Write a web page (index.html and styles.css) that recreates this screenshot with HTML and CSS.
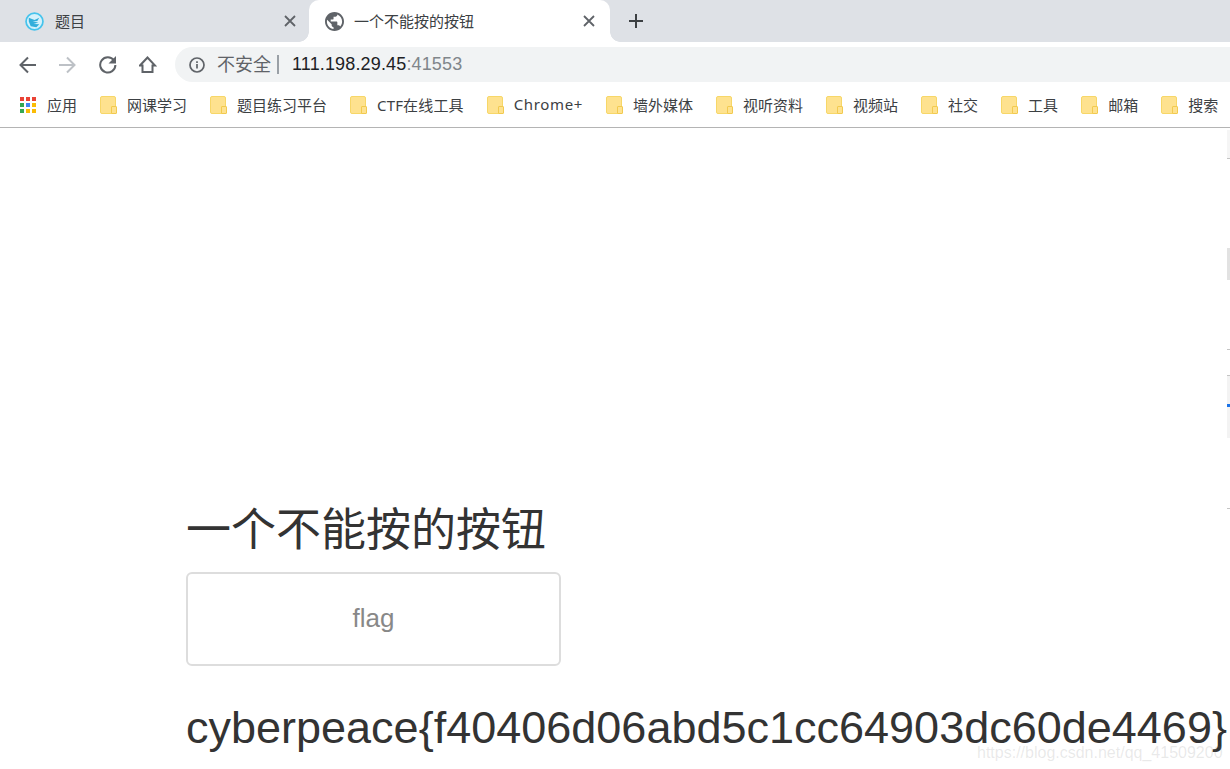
FILE: index.html
```html
<!DOCTYPE html>
<html lang="zh-CN">
<head>
  <meta charset="UTF-8" />
  <title>一个不能按的按钮</title>
  <link rel="stylesheet" href="styles.css">
</head>
<body>
  <div class="tabstrip">
    <div class="tab">
      <svg class="favicon" viewBox="0 0 20 20">
        <circle cx="10" cy="10" r="8.900" fill="#d4f1fb" stroke="#45c3ec" stroke-width="1.800"/>
        <path d="M4 6l6 2.500 5-2.500-2 3.500-5 .5 6 1-5 1.500 6 .5-3 3-6-1-2-5z" fill="#32aedb"/>
      </svg>
      <span class="tab-title">题目</span>
      <svg class="tab-close" viewBox="0 0 12 12"><path d="M1 1l10 10M11 1L1 11"/></svg>
    </div>
    <div class="tab active">
      <svg class="favicon" viewBox="2 2 20 20">
        <path fill="#5f6368" d="M12 2C6.480 2 2 6.480 2 12s4.480 10 10 10 10-4.480 10-10S17.520 2 12 2zm-1 17.930c-3.950-.490-7-3.850-7-7.930 0-.620.080-1.210.210-1.790L9 15v1c0 1.100.900 2 2 2v1.930zm6.900-2.540c-.260-.810-1-1.390-1.900-1.390h-1v-3c0-.550-.450-1-1-1H8v-2h2c.550 0 1-.450 1-1V7h2c1.100 0 2-.900 2-2v-.410c2.930 1.190 5 4.060 5 7.410 0 2.080-.800 3.970-2.100 5.390z"/>
      </svg>
      <span class="tab-title">一个不能按的按钮</span>
      <svg class="tab-close" viewBox="0 0 12 12"><path d="M1 1l10 10M11 1L1 11"/></svg>
    </div>
    <svg class="new-tab" viewBox="0 0 16 16"><path d="M8 1v14M1 8h14"/></svg>
  </div>

  <div class="toolbar">
    <svg class="nav-btn" viewBox="0 0 18 18"><path d="M17 9H1.500M9 1.500L1.500 9 9 16.500"/></svg>
    <svg class="nav-btn off" viewBox="0 0 18 18"><path d="M0 9h15.500M8 1.500L15.500 9 8 16.500"/></svg>
    <svg class="nav-btn" viewBox="0 0 18 18"><path d="M15 4.500A7.600 7.600 0 1 0 16.400 9"/><path class="solid" d="M17 0v7.500H9.500z"/></svg>
    <svg class="nav-btn" viewBox="0 0 18 18"><path d="M8.500 1.500L1 9.500h2.500v6.500h10V9.500H16z"/></svg>
    <div class="omnibox">
      <svg class="info" viewBox="0 0 16 16">
        <circle cx="8" cy="8" r="7"/>
        <path d="M8 7v4.500M8 4.200v1.700"/>
      </svg>
      <span class="insecure">不安全</span>
      <span class="sep"></span>
      <span class="url">111.198.29.45<span class="port">:41553</span></span>
    </div>
  </div>

  <div class="bookmarks">
    <div class="bm apps">
      <svg class="apps-icon" viewBox="0 0 16 16">
        <rect x="0" y="0" width="4" height="4" fill="#ea4335"/><rect x="6" y="0" width="4" height="4" fill="#ea4335"/><rect x="12" y="0" width="4" height="4" fill="#ea4335"/>
        <rect x="0" y="6" width="4" height="4" fill="#34a853"/><rect x="6" y="6" width="4" height="4" fill="#4285f4"/><rect x="12" y="6" width="4" height="4" fill="#fbbc05"/>
        <rect x="0" y="12" width="4" height="4" fill="#34a853"/><rect x="6" y="12" width="4" height="4" fill="#fbbc05"/><rect x="12" y="12" width="4" height="4" fill="#fbbc05"/>
      </svg>
      <span>应用</span>
    </div>
    <div class="bm"><i class="folder"></i><span>网课学习</span></div>
    <div class="bm"><i class="folder"></i><span>题目练习平台</span></div>
    <div class="bm"><i class="folder"></i><span class="ctf">CTF在线工具</span></div>
    <div class="bm"><i class="folder"></i><span class="wide">Chrome+</span></div>
    <div class="bm"><i class="folder"></i><span>墙外媒体</span></div>
    <div class="bm"><i class="folder"></i><span>视听资料</span></div>
    <div class="bm"><i class="folder"></i><span>视频站</span></div>
    <div class="bm"><i class="folder"></i><span>社交</span></div>
    <div class="bm"><i class="folder"></i><span>工具</span></div>
    <div class="bm"><i class="folder"></i><span>邮箱</span></div>
    <div class="bm"><i class="folder"></i><span>搜索</span></div>
  </div>

  <main class="page">
    <h1>一个不能按的按钮</h1>
    <button class="flag-btn" type="button">flag</button>
    <h2>cyberpeace{f40406d06abd5c1cc64903dc60de4469}</h2>
  </main>

  <div class="edge">
    <div class="edge-a"></div>
    <div class="edge-b"></div>
    <div class="edge-c"></div>
    <div class="edge-d"></div>
  </div>
  <div class="watermark">https://blog.csdn.net/qq_41509200</div>
</body>
</html>
```

FILE: styles.css
```css
*{box-sizing:border-box}
html,body{margin:0;height:100%;overflow:hidden}
body{
  position:relative;background:#fff;color:#333;
  font-family:"Liberation Sans","Noto Sans CJK SC",sans-serif;
}

/* tabs */
.tabstrip{height:42px;background:#dee1e6;display:flex;align-items:center}
.tab{
  width:300px;height:42px;display:flex;align-items:center;
  padding:0 4px 0 25px;color:#3c4043;
  font:15px "Noto Sans","Noto Sans CJK SC",sans-serif;
}
.tab.active{
  width:301px;margin-left:9px;padding:0 15px 0 16px;background:#fff;
  border-radius:10px 10px 0 0;position:relative;
}
.tab.active::before,.tab.active::after{
  content:"";position:absolute;bottom:0;width:10px;height:10px;
}
.tab.active::before{
  left:-10px;
  background:radial-gradient(circle at 0 0,#dee1e6 9.500px,#fff 10px);
}
.tab.active::after{
  right:-10px;
  background:radial-gradient(circle at 100% 0,#dee1e6 9.500px,#fff 10px);
}
.favicon{width:19px;height:19px;flex:none}
.tab-title{margin:-2px 0 0 11px;flex:1;white-space:nowrap}
.tab.active .tab-title{margin-left:10px}
.tab-close{width:12px;height:12px;flex:none;fill:none;stroke:#5f6368;stroke-width:1.800}
.new-tab{width:16px;height:16px;margin-left:18px;fill:none;stroke:#3c4043;stroke-width:2}

/* toolbar */
.toolbar{height:46px;padding:5px 0 6px 19px;display:flex;align-items:center;gap:22px;background:#fff}
.nav-btn{width:18px;height:18px;flex:none;fill:none;stroke:#5f6368;stroke-width:2}
.nav-btn.off{stroke:#bdc1c6}
.nav-btn .solid{fill:#5f6368;stroke:none}
.omnibox{
  flex:1;height:35px;margin-left:-4px;padding-left:14px;
  display:flex;align-items:center;background:#f1f3f4;
  border-radius:18px 0 0 18px;font-size:18px;
}
.info{width:16px;height:16px;flex:none;fill:none;stroke:#5f6368;stroke-width:1.700}
.insecure{margin:0 0 4px 12px;color:#5f6368}
.sep{width:2px;height:19px;margin:0 13px 0 6px;background:#9aa0a6}
.url{color:#202124;letter-spacing:.15px}
.port{color:#80868b}

/* bookmarks */
.bookmarks{
  height:40px;padding:0 0 5px 20px;display:flex;align-items:center;
  border-bottom:1px solid #b4b4b4;color:#3c4043;background:#fff;
  font:15px "Noto Sans","Noto Sans CJK SC",sans-serif;
}
.bm{display:flex;align-items:center;margin-right:23px;white-space:nowrap}
.bm span{margin-top:-2px}
.bm .ctf{letter-spacing:.15px}
.bm .wide{letter-spacing:.65px}
.apps-icon{width:16px;height:16px;margin-right:11px}
.folder{
  width:16px;height:18px;margin-right:11px;flex:none;display:block;position:relative;
  background:#fee28f;border:1px solid #f7d768;border-radius:2px;
}
.folder::after{
  content:"";position:absolute;right:-2px;bottom:-1px;width:4px;height:6px;
  border:1px solid #f2ca4f;border-radius:1px;background:#fee28f;
}

/* page */
.page{padding:372px 0 0 186px;white-space:nowrap}
.page h1{margin:0;font-size:45px;line-height:54px;font-weight:400;color:#333;height:72px;padding-top:4px}
.flag-btn{
  display:block;width:375px;height:94px;padding:0 0 2px;background:#fff;
  border:2px solid #ddd;border-radius:6px;color:#888;
  font:26px "Liberation Sans",sans-serif;
}
.page h2{margin:36px 0 0;font-size:45px;line-height:52px;font-weight:400;color:#333}

/* cut-off widgets on the right edge */
.edge{position:absolute;right:0;top:130px;width:3px;height:380px}
.edge div{position:absolute;left:0;width:3px}
.edge-a{top:0;height:29px;background:#f5f5f5;border-bottom:1px solid #c4c4c4}
.edge-b{top:118px;height:32px;background:#e2e2e2}
.edge-c{top:219px;height:1px;background:#c4c4c4}
.edge-d{top:245px;height:134px;background:linear-gradient(#f3f3f3 62px,#fff 62px);border-top:1px solid #c4c4c4;border-bottom:1px solid #c4c4c4}
.edge-d::after{content:"";position:absolute;left:0;top:28px;width:3px;height:3px;background:#1a73e8}
.watermark{
  position:absolute;left:977px;top:744px;
  font-size:16px;color:rgba(120,120,120,.17);white-space:nowrap;
}
```
